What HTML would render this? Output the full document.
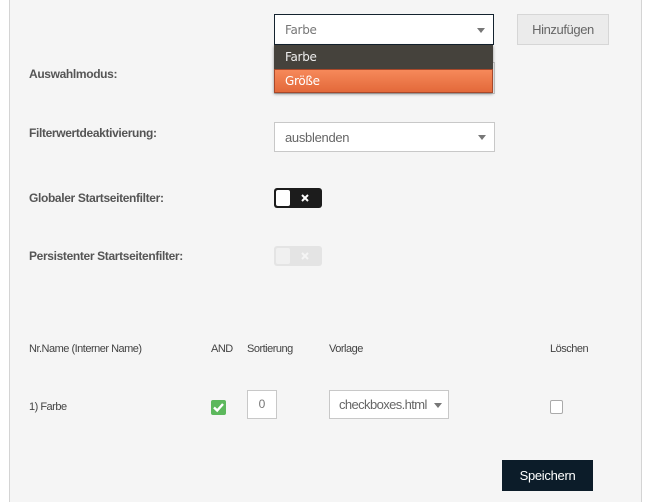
<!DOCTYPE html>
<html><head><meta charset="utf-8"><style>
*{box-sizing:border-box;margin:0;padding:0}
html,body{width:646px;height:502px;overflow:hidden}
body{background:#fff;position:relative;font-family:"Liberation Sans",sans-serif;color:#555}
.panel{position:absolute;left:9px;top:-2px;width:633px;height:504px;background:#f5f5f5;border:1px solid #d4d4d4;border-bottom:none}
.a{position:absolute}
.lbl{font-weight:bold;font-size:12px;color:#555;letter-spacing:-0.35px}
.sel{background:#fff;border:1px solid #c8c8c8;font-size:13px;color:#666;padding-left:10px;display:flex;align-items:center;letter-spacing:-0.3px}
.car{position:absolute;right:8px;top:50%;margin-top:-2px;width:0;height:0;border-left:4px solid transparent;border-right:4px solid transparent;border-top:5px solid #777}
.th{font-size:11px;color:#444;letter-spacing:-0.5px}
</style></head><body>
<div class="panel"></div>

<div class="a sel" style="left:274px;top:62px;width:221px;height:32px"></div>
<div class="a sel" style="left:274px;top:14px;width:220px;height:31px;border-color:#14232f;font-family:'DejaVu Sans',sans-serif;font-size:12px;color:#777">Farbe<span class="car"></span></div>
<div class="a" style="left:274px;top:45px;width:219px;height:48px;box-shadow:0 1px 3px rgba(0,0,0,.4)">
 <div style="height:24px;background:#45423c;color:#eee;font-family:'DejaVu Sans',sans-serif;font-size:12px;padding:5px 0 0 11px;letter-spacing:-0.3px">Farbe</div>
 <div style="height:24px;background:linear-gradient(#f6895a,#e3693a);border:1px solid #a8482a;color:#fff;font-family:'DejaVu Sans',sans-serif;font-size:12px;padding:4px 0 0 10px;letter-spacing:-0.3px">Größe</div>
</div>
<div class="a" style="left:517px;top:14px;width:92px;height:31px;background:#ebebeb;border:1px solid #d6d6d6;font-size:13px;color:#666;text-align:center;line-height:29px;letter-spacing:-0.4px">Hinzufügen</div>

<div class="a lbl" style="left:29px;top:67px">Auswahlmodus:</div>
<div class="a lbl" style="left:29px;top:126px">Filterwertdeaktivierung:</div>
<div class="a sel" style="left:274px;top:122px;width:221px;height:30px">ausblenden<span class="car"></span></div>

<div class="a lbl" style="left:29px;top:191px">Globaler Startseitenfilter:</div>
<div class="a" style="left:274px;top:188px;width:48px;height:20px;background:#1c1c1c;border-radius:3px">
 <div class="a" style="left:2px;top:2px;width:14px;height:16px;background:#fff;border-radius:2px"></div>
 <svg class="a" style="left:27px;top:6px" width="8" height="8"><path d="M1 1L7 7M7 1L1 7" stroke="#fff" stroke-width="2"/></svg>
</div>
<div class="a lbl" style="left:29px;top:249px">Persistenter Startseitenfilter:</div>
<div class="a" style="left:274px;top:246px;width:48px;height:20px;background:#e4e4e4;border-radius:3px">
 <div class="a" style="left:2px;top:2px;width:14px;height:16px;background:#f0f0f0;border-radius:2px"></div>
 <svg class="a" style="left:27px;top:6px" width="8" height="8"><path d="M1 1L7 7M7 1L1 7" stroke="#f5f5f5" stroke-width="2"/></svg>
</div>

<div class="a th" style="left:29px;top:343px">Nr.Name (Interner Name)</div>
<div class="a th" style="left:211px;top:343px">AND</div>
<div class="a th" style="left:247px;top:343px">Sortierung</div>
<div class="a th" style="left:329px;top:343px">Vorlage</div>
<div class="a th" style="left:550px;top:343px">Löschen</div>

<div class="a th" style="left:29px;top:401px">1) Farbe</div>
<div class="a" style="left:211px;top:400px;width:15px;height:15px;background:#5cb85c;border-radius:2px">
 <svg width="15" height="15" style="position:absolute;left:0;top:0"><path d="M3 7.5 L6.2 10.5 L12 4" stroke="#fff" stroke-width="2.4" fill="none"/></svg>
</div>
<div class="a" style="left:247px;top:390px;width:30px;height:29px;background:#fff;border:1px solid #c8c8c8;font-size:12px;color:#777;text-align:center;line-height:27px">0</div>
<div class="a sel" style="left:329px;top:390px;width:120px;height:29px;padding-left:9px;font-size:13px;letter-spacing:-0.6px">checkboxes.html<span class="car" style="right:6px"></span></div>
<div class="a" style="left:550px;top:400px;width:13px;height:14px;background:#fff;border:1px solid #aaa;border-radius:2px"></div>

<div class="a" style="left:502px;top:460px;width:91px;height:31px;background:#0c1c29;color:#fff;font-size:13px;text-align:center;line-height:31px;letter-spacing:-0.3px">Speichern</div>
</body></html>
